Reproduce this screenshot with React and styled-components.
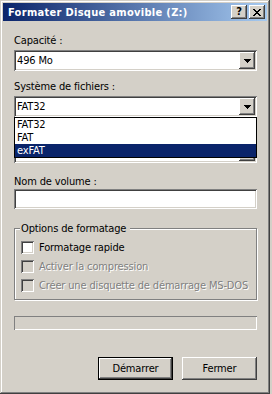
import styled, { createGlobalStyle } from 'styled-components'

const GlobalStyle = createGlobalStyle`
  html, body {
    margin: 0;
    padding: 0;
    background: #d4d0c8;
  }
  body {
    font-family: "DejaVu Sans Condensed", "Liberation Sans", sans-serif;
    font-size: 11px;
    letter-spacing: -0.15px;
    color: #000;
  }
`

const raised = `
  box-shadow: inset -1px -1px #404040, inset 1px 1px #ffffff,
    inset -2px -2px #808080, inset 2px 2px #d4d0c8;
`

const sunken = `
  box-shadow: inset 1px 1px #808080, inset -1px -1px #ffffff,
    inset 2px 2px #404040, inset -2px -2px #d4d0c8;
`

const Window = styled.div`
  width: 270px;
  height: 394px;
  box-sizing: border-box;
  padding: 3px;
  background: #d4d0c8;
  display: flex;
  flex-direction: column;
  box-shadow: inset -1px -1px #404040, inset 1px 1px #d4d0c8,
    inset -2px -2px #808080, inset 2px 2px #ffffff;
`

const TitleBar = styled.div`
  height: 18px;
  display: flex;
  align-items: center;
  padding: 0 2px 0 5px;
  background: linear-gradient(to right, #0a246a, #a6caf0);
  color: #fff;
  font-weight: bold;
  font-size: 11px;
  letter-spacing: 0.3px;
`

const Title = styled.span`
  flex: 1;
  white-space: nowrap;
`

const TitleButtons = styled.div`
  display: flex;
  gap: 2px;
`

const TitleButton = styled.div`
  width: 16px;
  height: 14px;
  background: #d4d0c8;
  display: flex;
  align-items: center;
  justify-content: center;
  color: #000;
  font-weight: bold;
  font-size: 11px;
  line-height: 14px;
  letter-spacing: 0;
  ${raised}
`

const Content = styled.div`
  display: flex;
  flex-direction: column;
  padding: 0 10px 0 11px;
`

const Label = styled.div`
  line-height: 13px;
  height: 13px;
  margin-top: ${p => p.$mt}px;
  white-space: nowrap;
`

const ComboWrap = styled.div`
  position: relative;
  margin-top: 3px;
`

const Combo = styled.div`
  height: 21px;
  box-sizing: border-box;
  background: #fff;
  display: flex;
  align-items: center;
  padding: 2px 2px 2px 3px;
  ${sunken}
`

const ComboText = styled.span`
  flex: 1;
  line-height: 13px;
`

const ArrowButton = styled.div`
  width: 16px;
  height: 17px;
  background: #d4d0c8;
  display: flex;
  align-items: center;
  justify-content: center;
  ${raised}
`

const DropList = styled.ul`
  position: absolute;
  top: 100%;
  left: 0;
  right: 0;
  margin: 0;
  padding: 0;
  list-style: none;
  background: #fff;
  border: 1px solid #000;
  z-index: 2;
`

const DropItem = styled.li`
  height: 13px;
  line-height: 13px;
  padding-left: 2px;
  background: ${p => (p.$selected ? '#0a246a' : 'transparent')};
  color: ${p => (p.$selected ? '#fff' : '#000')};
`

const TextInput = styled.div`
  height: 20px;
  margin-top: 1px;
  box-sizing: border-box;
  background: #fff;
  ${sunken}
`

const Group = styled.fieldset`
  margin: 13px 0 0;
  padding: 3px 0 4px 6px;
  border: 1px solid #808080;
  box-shadow: inset 1px 1px #fff, 1px 1px #fff;
`

const Legend = styled.legend`
  padding: 0 4px 0 1px;
  margin-left: -1px;
  line-height: 13px;
  background: #d4d0c8;
`

const CheckRow = styled.div`
  height: 19px;
  display: flex;
  align-items: center;
  gap: 5px;
  color: ${p => (p.$disabled ? '#808080' : '#000')};
  text-shadow: ${p => (p.$disabled ? '1px 1px #fff' : 'none')};
  white-space: nowrap;
`

const CheckBox = styled.span`
  width: 13px;
  height: 13px;
  flex: 0 0 13px;
  background: ${p => (p.$disabled ? '#d4d0c8' : '#fff')};
  ${sunken}
`

const Progress = styled.div`
  height: 14px;
  margin-top: 16px;
  box-sizing: border-box;
  box-shadow: inset 1px 1px #808080, inset -1px -1px #fff;
`

const ButtonRow = styled.div`
  display: flex;
  justify-content: flex-end;
  gap: 9px;
  margin-top: 27px;
`

const Button = styled.div`
  width: 75px;
  height: 23px;
  box-sizing: border-box;
  display: flex;
  align-items: center;
  justify-content: center;
  background: #d4d0c8;
  ${p =>
    p.$default
      ? `box-shadow: inset 0 0 0 1px #000, inset -2px -2px #404040, inset 2px 2px #fff, inset -3px -3px #808080;`
      : raised}
`

const Arrow = () => (
  <svg width='7' height='4' viewBox='0 0 7 4'>
    <path d='M0 0h7v1H0zM1 1h5v1H1zM2 2h3v1H2zM3 3h1v1H3z' fill='#000' />
  </svg>
)

const CloseGlyph = () => (
  <svg width='8' height='7' viewBox='0 0 8 7'>
    <path
      d='M0 0h2v1H0zM6 0h2v1H6zM1 1h2v1H1zM5 1h2v1H5zM2 2h4v1H2zM3 3h2v1H3zM2 4h4v1H2zM1 5h2v1H1zM5 5h2v1H5zM0 6h2v1H0zM6 6h2v1H6z'
      fill='#000'
    />
  </svg>
)

const ComboBox = ({ value, items, selected }) => (
  <ComboWrap>
    <Combo>
      <ComboText>{value}</ComboText>
      <ArrowButton><Arrow /></ArrowButton>
    </Combo>
    {items && (
      <DropList>
        {items.map(item => (
          <DropItem key={item} $selected={item === selected}>{item}</DropItem>
        ))}
      </DropList>
    )}
  </ComboWrap>
)

const options = [
  { label: 'Formatage rapide', disabled: false },
  { label: 'Activer la compression', disabled: true },
  { label: 'Créer une disquette de démarrage MS-DOS', disabled: true }
]

const App = () => (
  <>
    <GlobalStyle />
    <Window>
      <TitleBar>
        <Title>Formater Disque amovible (Z:)</Title>
        <TitleButtons>
          <TitleButton>?</TitleButton>
          <TitleButton><CloseGlyph /></TitleButton>
        </TitleButtons>
      </TitleBar>
      <Content>
        <Label $mt={13}>Capacité :</Label>
        <ComboBox value='496 Mo' />
        <Label $mt={9}>Système de fichiers :</Label>
        <ComboBox value='FAT32' items={['FAT32', 'FAT', 'exFAT']} selected='exFAT' />
        {/* allocation size row, hidden under the open list */}
        <Label $mt={9} />
        <ComboBox value='' />
        <Label $mt={12}>Nom de volume :</Label>
        <TextInput />
        <Group>
          <Legend>Options de formatage</Legend>
          {options.map(o => (
            <CheckRow key={o.label} $disabled={o.disabled}>
              <CheckBox $disabled={o.disabled} />
              {o.label}
            </CheckRow>
          ))}
        </Group>
        <Progress />
        <ButtonRow>
          <Button $default>Démarrer</Button>
          <Button>Fermer</Button>
        </ButtonRow>
      </Content>
    </Window>
  </>
)

export default App
